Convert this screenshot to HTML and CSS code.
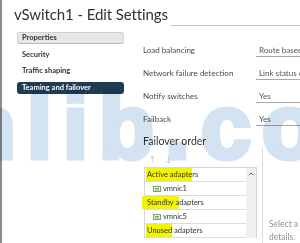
FILE: index.html
```html
<!DOCTYPE html>
<html lang="en">
<head>
<meta charset="utf-8">
<title>vSwitch1 - Edit Settings</title>
<link rel="stylesheet" href="styles.css">
</head>
<body>
<div class="frame">
  <div class="edge"></div>
  <div class="dialog">
    <header class="head">
      <h1 class="title">vSwitch1 - Edit Settings</h1>
      <div class="rule"></div>
    </header>
    <div class="body">
      <nav class="nav">
        <div class="nav-item group">Properties</div>
        <div class="nav-item">Security</div>
        <div class="nav-item">Traffic shaping</div>
        <div class="nav-item active">Teaming and failover</div>
      </nav>
      <main class="content">
        <div class="form">
          <div class="row"><span class="label">Load balancing</span><span class="value">Route based on originating virtual port</span></div>
          <div class="row"><span class="label">Network failure detection</span><span class="value">Link status only</span></div>
          <div class="row"><span class="label">Notify switches</span><span class="value">Yes</span></div>
          <div class="row"><span class="label">Failback</span><span class="value">Yes</span></div>
        </div>
        <h2 class="section">Failover order</h2>
        <div class="failover">
          <div class="order">
            <div class="arrows"><span>↑</span><span>↓</span></div>
            <div class="list">
              <div class="rows">
                <div class="li head-row"><span class="mark mark-a">Active adapte</span>rs</div>
                <div class="li nic"><svg class="nic-icon" viewBox="0 0 8 6" width="8" height="6"><rect x="0.5" y="0.5" width="7" height="5" fill="#eef6e8" stroke="#7aa85a"/><line x1="2" y1="2.5" x2="6" y2="2.5" stroke="#7aa85a"/><line x1="2" y1="4" x2="6" y2="4" stroke="#7aa85a"/></svg>vmnic1</div>
                <div class="li head-row"><span class="mark mark-s">Standby a</span>dapters</div>
                <div class="li nic"><svg class="nic-icon" viewBox="0 0 8 6" width="8" height="6"><rect x="0.5" y="0.5" width="7" height="5" fill="#eef6e8" stroke="#7aa85a"/><line x1="2" y1="2.5" x2="6" y2="2.5" stroke="#7aa85a"/><line x1="2" y1="4" x2="6" y2="4" stroke="#7aa85a"/></svg>vmnic5</div>
                <div class="li head-row"><span class="mark mark-u">Unused</span> adapters</div>
              </div>
              <div class="scroll"><svg viewBox="0 0 6 4" width="6" height="4"><path d="M0.8 3.2 L3 1 L5.2 3.2" fill="none" stroke="#666" stroke-width="1"/></svg></div>
            </div>
          </div>
          <div class="detail">Select a physical adapter to view its details.</div>
        </div>
      </main>
    </div>
  </div>
  <div class="watermark">nlib.co</div>
</div>
</body>
</html>
```

FILE: styles.css
```css
* { box-sizing: border-box; }
html, body { margin: 0; padding: 0; background: #fff; }
body { width: 300px; height: 243px; overflow: hidden; font-family: Lato, "Liberation Sans", sans-serif; color: #4a4a4a; }

.frame { position: relative; display: flex; width: 300px; height: 243px; overflow: hidden; }
.edge { width: 2px; flex: none; background: #8c8c8c; }
.dialog { flex: 1; display: flex; flex-direction: column; min-width: 0; }

.head { display: flex; align-items: flex-end; height: 26px; padding-left: 12px; }
.title { margin: 0; font-weight: 400; font-size: 15px; line-height: 18px; color: #333; white-space: nowrap; letter-spacing: -0.1px; padding-bottom: 3px; }
.rule { flex: 1; border-bottom: 1px solid #c9c9c9; margin-left: 3px; }

.body { display: flex; flex: 1; min-height: 0; }
.nav { width: 107px; margin-left: 15px; padding-top: 6px; display: flex; flex-direction: column; gap: 4.5px; flex: none; }
.nav-item { height: 12px; line-height: 12px; font-size: 7.5px; font-weight: 700; color: #333; padding-left: 5px; border-radius: 3px; white-space: nowrap; }
.nav-item.group { background: #e7e7e7; border: 1px solid #d0d0d0; border-bottom-color: #b9b9b9; line-height: 10px; padding-left: 4px; }
.nav-item.active { background: #1f3c54; color: #fff; }

.content { margin-left: 19px; flex: 1; min-width: 0; white-space: nowrap; }
.form { padding-top: 12.5px; }
.row { display: flex; align-items: center; height: 23px; font-size: 8px; }
.label { width: 113px; flex: none; color: #4a4a4a; }
.value { flex: 1; min-width: 0; overflow: hidden; line-height: 12px; border-bottom: 1px solid #a8a8a8; padding-left: 3px; color: #555; }

.section { margin: 3.5px 0 0; font-size: 10.5px; line-height: 14px; font-weight: 400; color: #333; }

.failover { display: flex; }
.order { width: 114px; flex: none; }
.arrows { display: flex; gap: 10px; padding-left: 6px; margin-top: 6px; height: 10px; font-size: 8px; line-height: 10px; color: #c2c2c2; }
.list { display: flex; margin-top: 3px; margin-left: 1px; border: 1px solid #d6d6d6; border-bottom: none; }
.rows { flex: 1; }
.li { height: 14px; line-height: 13px; font-size: 7.5px; border-bottom: 1px solid #dcdcdc; padding-left: 2px; color: #333; }
.li.nic { display: flex; align-items: center; gap: 2px; padding-left: 8px; line-height: 13px; }
.nic-icon { flex: none; }
.mark { background: #f3f500; padding: 2px 0 2px 1px; margin-left: -1px; }
.mark-s { margin-left: -5px; padding-left: 5px; }
.scroll { width: 10px; flex: none; background: #efefef; display: flex; justify-content: center; padding-top: 4px; }

.detail { flex: none; margin-left: 5px; border-left: 1px solid #dcdcdc; padding-left: 6px; padding-top: 70px; white-space: normal; width: 140px; font-size: 8.5px; line-height: 13.3px; color: #8f8f8f; }

.watermark { position: absolute; left: -39px; top: 82px; font-family: "Liberation Sans", sans-serif; font-weight: 700; font-size: 90px; line-height: 90px; letter-spacing: 11px; color: #d4e3f2; -webkit-text-stroke: 5px #d4e3f2; mix-blend-mode: multiply; pointer-events: none; white-space: nowrap; }
```
